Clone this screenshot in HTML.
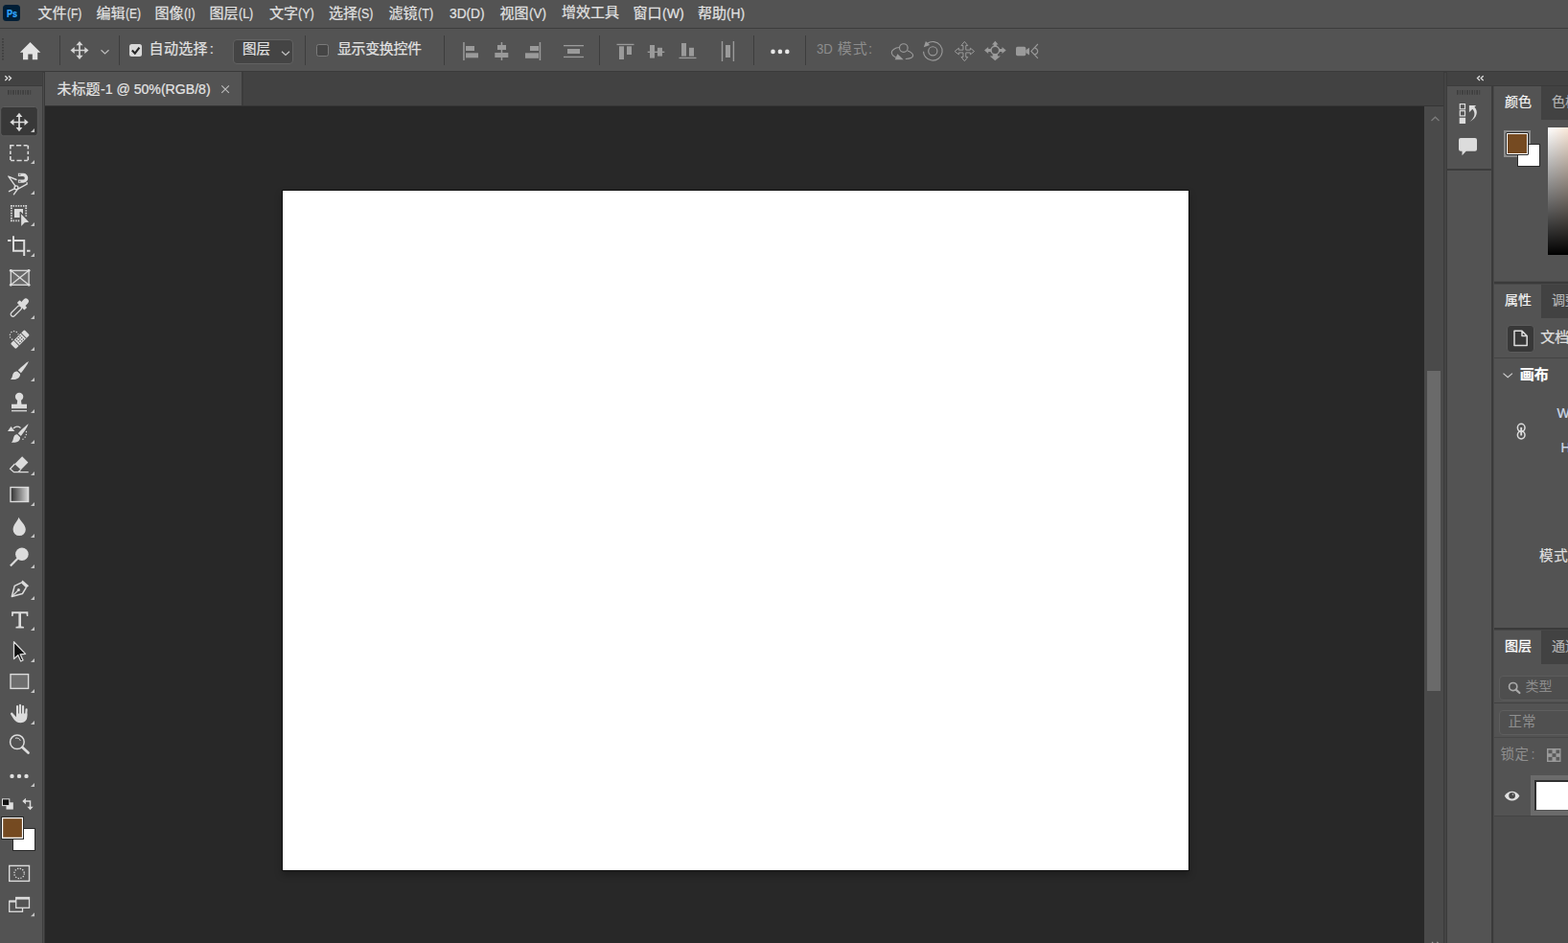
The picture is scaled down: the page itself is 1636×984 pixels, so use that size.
<!DOCTYPE html>
<html lang="zh">
<head>
<meta charset="utf-8">
<title>Photoshop</title>
<style>
*{box-sizing:border-box;margin:0;padding:0}
html,body{width:1636px;height:984px;overflow:hidden;background:#535353}
body{position:relative;font-family:"Liberation Sans","Noto Sans CJK SC",sans-serif;font-size:15px;color:#e2e2e2;line-height:1}
.a{position:absolute}
.t{position:absolute;white-space:nowrap;line-height:20px;height:20px;-webkit-text-stroke:.22px currentColor}
.lat{display:inline-block;font-size:15px;transform:scaleX(.8);transform-origin:0 50%}
/* structural blocks */
#menubar{left:0;top:0;width:1636px;height:29px;background:#535353}
#menuline{left:0;top:29px;width:1636px;height:1px;background:#3c3c3c}
#optbar{left:0;top:30px;width:1636px;height:44px;background:#535353}
#optline{left:0;top:74px;width:1636px;height:1px;background:#3a3a3a}
#tools{left:0;top:75px;width:44px;height:909px;background:#535353}
#toolshead{left:0;top:75px;width:44px;height:14px;background:#424242}
#tooldiv{left:44px;top:75px;width:3px;height:909px;background:#3e3e3e}
#tabbar{left:47px;top:75px;width:1459px;height:36px;background:#424242}
#doctab{left:47px;top:75px;width:205px;height:35px;background:#535353}
#work{left:47px;top:111px;width:1439px;height:873px;background:#282828}
#vscroll{left:1486px;top:111px;width:20px;height:873px;background:#4a4a4a}
#vthumb{left:1489px;top:387px;width:14px;height:334px;background:#6a6a6a}
#dockdiv{left:1506px;top:75px;width:4px;height:909px;background:#3b3b3b}
#dockhead{left:1510px;top:75px;width:126px;height:14px;background:#424242}
#dockline{left:1510px;top:89px;width:126px;height:1px;background:#3a3a3a}
#iconcol{left:1510px;top:90px;width:46px;height:894px;background:#535353}
#paneldiv{left:1556px;top:90px;width:3px;height:894px;background:linear-gradient(to right,#3a3a3a 0,#3a3a3a 67%,#494949 67%)}
.sep{position:absolute;top:37px;width:1px;height:31px;background:#3d3d3d}
.m{top:4px}
.tabwell{position:absolute;left:1608px;width:28px;background:#424242}
.hline{position:absolute;left:1559px;width:77px;height:1px;background:#444}
</style>
</head>
<body>

<!-- ===== structure ===== -->
<div class="a" id="menubar"></div>
<div class="a" id="menuline"></div>
<div class="a" id="optbar"></div>
<div class="a" id="optline"></div>
<div class="a" id="tools"></div>
<div class="a" id="toolshead"></div><div class="a" style="left:0;top:89px;width:44px;height:1px;background:#3a3a3a"></div>
<div class="a" id="tooldiv"></div><div class="a" style="left:45px;top:76px;width:1px;height:908px;background:#4b4b4b"></div><div class="a" style="left:46px;top:75px;width:1px;height:909px;background:#393939"></div>
<div class="a" id="tabbar"></div>
<div class="a" id="doctab"></div><div class="a" style="left:252px;top:75px;width:1.5px;height:35px;background:#3c3c3c"></div><div class="a" style="left:47px;top:110px;width:1459px;height:1px;background:#353535"></div>
<div class="a" id="work"></div>
<div class="a" id="vscroll"></div>
<div class="a" id="vthumb"></div>
<div class="a" id="dockdiv"></div><div class="a" style="left:1507px;top:76px;width:2px;height:908px;background:#444"></div>
<div class="a" id="dockhead"></div>
<div class="a" id="dockline"></div>
<div class="a" id="iconcol"></div>
<div class="a" id="paneldiv"></div>

<!-- canvas document -->
<div class="a" style="left:294px;top:198px;width:947px;height:711px;background:#111;box-shadow:0 4px 7px rgba(0,0,0,.26)"></div>
<div class="a" style="left:295px;top:199px;width:945px;height:709px;background:#fff"></div>

<!-- ===== menu bar ===== -->
<svg class="a" style="left:3px;top:5px" width="18" height="17" viewBox="0 0 18 17"><rect x="0" y="0" width="18" height="17" rx="3.5" fill="#001e36"/></svg>
<div class="t" style="left:6.7px;top:4.6px;font-size:10.3px;font-weight:bold;color:#31a8ff"><span class="lat" style="font-size:10.3px;transform:scaleX(.88)">Ps</span></div>
<div class="t m" id="m1" style="left:39.5px">文件<span class="lat" style="transform:scaleX(0.8)">(F)</span></div>
<div class="t m" id="m2" style="left:100.5px">编辑<span class="lat" style="transform:scaleX(0.8)">(E)</span></div>
<div class="t m" id="m3" style="left:161.5px">图像<span class="lat" style="transform:scaleX(0.82)">(I)</span></div>
<div class="t m" id="m4" style="left:218.5px">图层<span class="lat" style="transform:scaleX(0.83)">(L)</span></div>
<div class="t m" id="m5" style="left:281px">文字<span class="lat" style="transform:scaleX(0.84)">(Y)</span></div>
<div class="t m" id="m6" style="left:343px">选择<span class="lat" style="transform:scaleX(0.82)">(S)</span></div>
<div class="t m" id="m7" style="left:405.5px">滤镜<span class="lat" style="transform:scaleX(0.84)">(T)</span></div>
<div class="t m" id="m8" style="left:468.5px"><span class="lat" style="transform:scaleX(0.915)">3D(D)</span></div>
<div class="t m" id="m9" style="left:521.5px">视图<span class="lat" style="transform:scaleX(0.9)">(V)</span></div>
<div class="t" id="m10" style="left:586px;top:3px">增效工具</div>
<div class="t m" id="m11" style="left:660.5px">窗口<span class="lat" style="transform:scaleX(0.94)">(W)</span></div>
<div class="t m" id="m12" style="left:728px">帮助<span class="lat" style="transform:scaleX(0.92)">(H)</span></div>
<!--MENU-->
<!-- ===== options bar ===== -->
<div class="sep" style="left:62px"></div>
<div class="sep" style="left:124px"></div>
<div class="sep" style="left:318px"></div>
<div class="sep" style="left:463px"></div>
<div class="sep" style="left:625px"></div>
<div class="sep" style="left:786px"></div>
<div class="sep" style="left:840px"></div>
<div class="a" style="left:135px;top:46px;width:13px;height:13px;border-radius:2.5px;background:#d9d9d9"></div>
<div class="t" id="o1" style="left:155.6px;top:41.4px"><span style="letter-spacing:.3px">自动选择</span><span style="margin-left:2px">:</span></div>
<div class="a" style="left:243px;top:41px;width:63px;height:26px;border-radius:4px;background:#444;border:1px solid #626262"></div>
<div class="t" id="o2" style="left:253px;top:41.3px;font-size:14.5px">图层</div>
<div class="a" style="left:330px;top:46px;width:13px;height:13px;border-radius:2.5px;background:#454545;border:1px solid #7a7a7a"></div>
<div class="t" id="o3" style="left:352px;top:41.4px;letter-spacing:-0.4px">显示变换控件</div>
<div class="t" id="o4" style="left:851.5px;top:41px;color:#8d8d8d;-webkit-text-stroke:0"><span class="lat" style="transform:scaleX(.88);width:18px">3D</span> <span style="letter-spacing:1.2px">模式</span>:</div>
<!--OPTIONS-->
<!-- ===== document tab ===== -->
<div class="t" id="dt" style="left:59.5px;top:82.5px;color:#e4e4e4">未标题<span class="lat" style="transform:scaleX(.94)">-1 @ 50%(RGB/8)</span></div>
<!-- ===== icon column panel ===== -->
<div class="a" style="left:1509px;top:89px;width:48px;height:88px;border:1px solid #3c3c3c;background:#535353"></div>
<div class="a" style="left:1509px;top:177px;width:48px;height:1px;background:#3c3c3c"></div>
<!-- ===== color panel ===== -->
<div class="tabwell" style="top:90px;height:35px"></div>
<div class="t" id="p1" style="left:1570px;top:96px;font-size:14px;color:#f6f6f6;-webkit-text-stroke:.2px #f6f6f6">颜色</div>
<div class="t" id="p1b" style="left:1619px;top:96px;font-size:14px;color:#b4b4b4">色板</div>
<div class="a" style="left:1569px;top:136px;width:28px;height:28px;background:#8c8c8c"></div>
<div class="a" style="left:1583px;top:150px;width:24px;height:24px;background:#fff;border:1px solid #2a2a2a"></div>
<div class="a" style="left:1571px;top:138px;width:24px;height:24px;background:#fff;border:1px solid #262626;border-radius:1px"></div>
<div class="a" style="left:1573px;top:140px;width:20px;height:20px;background:#754a21"></div>
<div class="a" style="left:1615px;top:133px;width:21px;height:133px;background:linear-gradient(to bottom,rgba(0,0,0,0) 0%,#000 100%),linear-gradient(to right,#fff 0%,#fbe9da 100%)"></div>
<div class="a" style="left:1559px;top:293px;width:77px;height:4px;background:linear-gradient(#4b4b4b 0,#4b4b4b 25%,#3a3a3a 25%,#3a3a3a 75%,#474747 75%)"></div>
<!-- ===== properties panel ===== -->
<div class="tabwell" style="top:297px;height:35px"></div>
<div class="t" id="p2" style="left:1570px;top:303px;font-size:14px;color:#f6f6f6;-webkit-text-stroke:.2px #f6f6f6">属性</div>
<div class="t" id="p2b" style="left:1619px;top:303px;font-size:14px;color:#b4b4b4">调整</div>
<div class="a" style="left:1572px;top:339px;width:29px;height:29px;border:1px solid #5c5c5c;border-radius:4px;background:#383838"></div>
<div class="t" id="p3" style="left:1607.3px;top:342px;color:#e0e0e0">文档</div>
<div class="hline" style="top:373px"></div>
<div class="t" id="p4" style="left:1585.7px;top:380.8px;font-weight:bold;color:#fff">画布</div>
<div class="t" id="p5" style="left:1624.5px;top:421px;font-size:14px;color:#cfd9e8">W</div>
<div class="t" id="p6" style="left:1628.500px;top:456.500px;font-size:14px;color:#cfd9e8">H</div>
<div class="t" id="p7" style="left:1606px;top:569.5px;font-size:14.5px;letter-spacing:.8px;color:#dedede">模式</div>
<div class="a" style="left:1559px;top:655px;width:77px;height:3px;background:linear-gradient(#3a3a3a 0,#3a3a3a 67%,#474747 67%)"></div>
<!-- ===== layers panel ===== -->
<div class="tabwell" style="top:658px;height:35px"></div>
<div class="t" id="p8" style="left:1570px;top:664px;font-size:14px;color:#fff;-webkit-text-stroke:.3px #fff">图层</div>
<div class="t" id="p8b" style="left:1619px;top:664px;font-size:14px;color:#b4b4b4">通道</div>
<div class="a" style="left:1564px;top:705px;width:80px;height:26px;border:1px solid #5c5c5c;border-radius:4px;background:#4e4e4e"></div>
<div class="t" id="p9" style="left:1591.5px;top:706px;font-size:14px;color:#8c8c8c;-webkit-text-stroke:0">类型</div>
<div class="hline" style="top:733px;background:#414141"></div>
<div class="a" style="left:1564px;top:741px;width:80px;height:26px;border:1px solid #5e5e5e;border-radius:4px;background:#505050"></div>
<div class="t" id="p10" style="left:1573.5px;top:743px;font-size:14.500px;color:#8f8f8f;-webkit-text-stroke:0">正常</div>
<div class="hline" style="top:769px;background:#484848"></div>
<div class="t" id="p11" style="left:1565.5px;top:777px;font-size:14.500px;color:#8f8f8f;-webkit-text-stroke:0"><span style="letter-spacing:.5px">锁定</span><span style="margin-left:2px">:</span></div>
<div class="a" style="left:1597px;top:809px;width:39px;height:42px;background:#6b6b6b"></div>
<div class="a" style="left:1601px;top:814px;width:35px;height:32px;background:#fff;border-left:2px solid #303030;border-top:2px solid #303030;border-bottom:1px solid #555"></div>
<div class="hline" style="top:851px;background:#444"></div>
<div class="a" style="left:1559px;top:852px;width:77px;height:132px;background:#4d4d4d"></div>
<!--PANELS-->
<!-- ===== icon overlay (page coordinates) ===== -->
<svg class="a" style="left:0;top:0" width="1636" height="984" viewBox="0 0 1636 984" fill="none">
<g id="optbar-icons">
<!-- gripper -->
<path d="M3 40v24" stroke="#3f3f3f" stroke-width="2" stroke-dasharray="1.5 1.5"/>
<!-- home -->
<path d="M31.5 44 L42.3 54.8 H39.2 V62.2 H33.8 V56.6 H29.3 V62.2 H24 V54.8 H20.8 Z" fill="#e3e3e3"/>
<!-- move tool (options) -->
<g stroke="#d4d4d4" stroke-width="1.7"><path d="M83 45.5v14M76 52.5h14"/></g>
<path d="M83 43l3.6 4.2h-7.2zM83 62l3.6-4.2h-7.2zM73.5 52.5l4.2-3.6v7.2zM92.5 52.5l-4.2-3.6v7.2z" fill="#d4d4d4"/>
<path d="M105.5 52.3l4 3.6 4-3.6" stroke="#bdbdbd" stroke-width="1.2"/>
<!-- checkmark -->
<path d="M137.8 52.6l3 3 4.6-6" stroke="#262626" stroke-width="2.1"/>
<!-- dropdown chevron -->
<path d="M294 53.8l4 3.6 4-3.6" stroke="#c4c4c4" stroke-width="1.2"/>
<!-- align group 1 -->
<g fill="#9a9a9a">
<rect x="483.2" y="44" width="1.5" height="19"/><rect x="486" y="48" width="9" height="5"/><rect x="486" y="55.3" width="13" height="5"/>
<rect x="522.7" y="44" width="1.5" height="19"/><rect x="519" y="47" width="9" height="5"/><rect x="516.3" y="55" width="14" height="5"/>
<rect x="562.7" y="44" width="1.5" height="19"/><rect x="553" y="48" width="9" height="5"/><rect x="548" y="55.3" width="14" height="5.5"/>
<rect x="588" y="47" width="21" height="1.3"/><rect x="588" y="58.8" width="21" height="1.3"/><rect x="592" y="51" width="13" height="5"/>
<!-- align group 2 -->
<rect x="643.5" y="45.8" width="18" height="1.3"/><rect x="646" y="48.3" width="5" height="13.7"/><rect x="654" y="48.3" width="5" height="8.7"/>
<rect x="675.7" y="53.6" width="17.6" height="1.4"/><rect x="678" y="47" width="5" height="13.6"/><rect x="686" y="49.8" width="5" height="8.8"/>
<rect x="708.5" y="59.8" width="18" height="1.3"/><rect x="711" y="45" width="5" height="13.6"/><rect x="719" y="49.8" width="5" height="8.8"/>
<rect x="752.8" y="43" width="1.4" height="21"/><rect x="764.7" y="43" width="1.4" height="21"/><rect x="757" y="47" width="5" height="13"/>
</g>
<!-- dots -->
<g fill="#e8e8e8"><circle cx="806.5" cy="53.9" r="2.3"/><circle cx="813.9" cy="53.9" r="2.3"/><circle cx="821.3" cy="53.9" r="2.3"/></g>
<!-- 3D icons -->
<g stroke="#9a9a9a" stroke-width="1.15" fill="none">
<circle cx="942.8" cy="50" r="4.3"/>
<path d="M938.5 49.5c-5 .3-8.500 3-8.200 5.500c.3 2.500 2.500 4.500 6.500 5.500M947 53c3.500 1.300 5.800 3.300 5.600 5.200c-.4 2.500-4 3.200-7.800 3.300"/>
<circle cx="973.3" cy="53.300" r="9.800" stroke-dasharray="52 9.600" transform="rotate(-128 973.3 53.3)"/>
<circle cx="973.3" cy="53.300" r="4.600"/>
<path d="M1006.35 43.35L1009.75 47.55L1007.75 47.55L1007.75 52.15L1012.35 52.15L1012.35 50.15L1016.55 53.55L1012.35 56.95L1012.35 54.95L1007.75 54.95L1007.75 59.55L1009.75 59.55L1006.35 63.75L1002.95 59.55L1004.95 59.55L1004.95 54.95L1000.35 54.95L1000.35 56.95L996.15 53.55L1000.35 50.15L1000.35 52.15L1004.95 52.15L1004.95 47.55L1002.95 47.55Z" stroke-width="1" stroke-linejoin="round"/>
<circle cx="1038.300" cy="52.500" r="4.300" stroke-width="1.400"/>
<path d="M1082.9 46l-7 7.4 7 7.500M1079.300 49.700c4.600 1.800 4.600 5.600 0 7.400" stroke-width="1.100"/>
</g>
<g fill="#9a9a9a">
<path d="M936.400 56.300L942.700 62.200H933.700Z"/>
<path d="M965.900 42.900L970.100 47.100L963.800 49.200Z"/>
<path d="M1038.300 42.800l3.300 3.600h-1.800v2.500h-3v-2.500h-1.800zM1038.300 63.200l5.600-4.600h-3v-2.600h-5.200v2.600h-3zM1027 52.500l4.200-3.600v2h3v3.200h-3v2zM1049.700 52.500l-4.200-3.600v2h-3v3.200h3v2z"/>
<rect x="1060" y="48.800" width="10.300" height="9.400" rx="1.600"/><path d="M1070.300 52.300l3.700-2.500v7.600l-3.700-2.500z"/>
</g>
</g>
<g id="tools-icons">
<!-- header chevrons + gripper -->
<path d="M5.300 79.200l2.500 2.400-2.500 2.400M9 79.200l2.500 2.400-2.500 2.400" stroke="#e0e0e0" stroke-width="1.300"/>
<path d="M8 96.300h24.500" stroke="#3d3d3d" stroke-width="4.800" stroke-dasharray="1.600 1.300 0.900 1.300"/>
<!-- selected bg -->
<rect x="0.700" y="111.500" width="38.600" height="30.300" rx="3" fill="#383838" stroke="#5d5d5d" stroke-width="1"/>
<!-- flyout triangles -->
<path d="M36 134 v4 h-4zM36 167 v4 h-4zM36 199 v4 h-4zM36 232 v4 h-4zM36 264 v4 h-4zM36 329 v4 h-4zM36 362 v4 h-4zM36 394 v4 h-4zM36 427 v4 h-4zM36 459 v4 h-4zM36 492 v4 h-4zM36 524 v4 h-4zM36 557 v4 h-4zM36 589 v4 h-4zM36 622 v4 h-4zM36 654 v4 h-4zM36 687 v4 h-4zM36 719 v4 h-4zM36 752 v4 h-4zM36 817 v4 h-4zM36 952.300 v4 h-4z" fill="#c4c4c4"/>
<!-- 0 move -->
<path d="M20 120v15M12.500 127.500h15" stroke="#dcdcdc" stroke-width="1.700"/>
<path d="M20 117.800l3.400 4.100h-6.800zM20 137.200l3.400-4.100h-6.800zM10.400 127.500l4.100-3.400v6.800zM29.600 127.500l-4.100-3.400v6.800z" fill="#dcdcdc"/>
<!-- 1 marquee -->
<rect x="10.900" y="151.700" width="18.400" height="15.800" stroke="#dcdcdc" stroke-width="1.600" stroke-dasharray="3.700 2.400 5.200 2.400 3.900 0.800 3.900 2.200 3.300 2.200 3.900 0.800 3.700 2.400 5.200 2.400 3.900 0.800 3.900 2.200 3.300 2.200 3.900 0"/>
<!-- 2 magnetic lasso -->
<g stroke="#dcdcdc" stroke-width="1.400" stroke-linecap="round"><path d="M8.900 184.100L17 187.500M8.900 184.100L16 194.200M15.200 196.900L9.500 199.700M28.100 190.800V192L18.800 197.200M18 197.800L14.400 202.800"/><circle cx="17" cy="195.800" r="1.900"/></g>
<path d="M18.900 180.700h5.300a5.050 5.050 0 0 1 0 10.100h-5.300v-3.200h5.100a1.850 1.850 0 0 0 0-3.700h-5.100z" fill="#dcdcdc"/>
<path d="M19.800 182.300h1.600M19.800 189.200h1.600" stroke="#535353" stroke-width="1.100"/>
<!-- 3 object select -->
<path d="M11 214.900H28M11.900 214V231.200M27.200 214V226.500M11 230.400H20.400" stroke="#dcdcdc" stroke-width="1.800" stroke-dasharray="1.400 1.200"/>
<rect x="15" y="218" width="9" height="9" fill="#dcdcdc"/>
<path d="M21.300 221.500L21.500 237.700L26 233.100L31.700 232.300Z" fill="#dcdcdc" stroke="#535353" stroke-width="1.500" stroke-linejoin="round"/>
<!-- 4 crop -->
<path d="M14 246.300v15.500h11M8 250.900h3.500M14 250.900h11.200v16.200M28 261.800h3.500" stroke="#dcdcdc" stroke-width="2"/>
<!-- 5 frame -->
<rect x="11.300" y="282.300" width="18.800" height="15" fill="#6a6a6a" stroke="#dcdcdc" stroke-width="1.300"/>
<path d="M11.300 282.300l18.800 15M30.100 282.300l-18.800 15" stroke="#dcdcdc" stroke-width="1.300"/>
<g fill="#dcdcdc"><circle cx="11.300" cy="282.300" r="1.400"/><circle cx="30.100" cy="282.300" r="1.400"/><circle cx="11.300" cy="297.300" r="1.400"/><circle cx="30.100" cy="297.300" r="1.400"/></g>
<!-- 6 eyedropper -->
<g transform="translate(20.400 321) rotate(45)">
<rect x="-2.300" y="-2" width="4.600" height="14" rx="2.300" stroke="#dcdcdc" stroke-width="1.300"/>
<rect x="-5.400" y="-5.600" width="10.800" height="4" rx="0.800" fill="#dcdcdc"/>
<rect x="-2.900" y="-12.200" width="5.800" height="8.500" rx="2.900" fill="#dcdcdc"/>
</g>
<!-- 7 healing -->
<circle cx="14.800" cy="350.200" r="4.500" stroke="#dcdcdc" stroke-width="1.200" stroke-dasharray="1.300 1.530"/>
<g transform="translate(20.900 354.100) rotate(-45)">
<rect x="-10.300" y="-4.600" width="20.600" height="9.200" fill="#535353"/>
<rect x="-10.300" y="-3.900" width="20.600" height="7.800" rx="1.300" fill="#dcdcdc"/>
<rect x="-5.700" y="-3.900" width="0.900" height="7.800" fill="#535353"/><rect x="4.800" y="-3.900" width="0.900" height="7.800" fill="#535353"/>
<g fill="#4a4a4a"><rect x="-3.1" y="-3.0" width="1.200" height="1.200"/><rect x="-0.6" y="-3.0" width="1.200" height="1.200"/><rect x="1.900" y="-3.0" width="1.200" height="1.200"/><rect x="-3.1" y="-0.6" width="1.200" height="1.200"/><rect x="-0.6" y="-0.6" width="1.200" height="1.200"/><rect x="1.900" y="-0.600" width="1.200" height="1.200"/><rect x="-3.1" y="1.8" width="1.200" height="1.200"/><rect x="-0.6" y="1.8" width="1.200" height="1.200"/><rect x="1.900" y="1.800" width="1.200" height="1.200"/></g>
</g>
<!-- 8 brush -->
<path d="M30 376.900C27 378.500 22.500 382.500 18.800 386.300L21.900 389.200C25 385.500 28.500 380.500 30 376.900Z" fill="#dcdcdc"/>
<path d="M18 387.400L21 390.300C21.300 393.500 18.500 395.600 15.500 395.900C13.800 396.100 12 396 11 395.900C12.600 394.800 12.800 392.500 13.400 390.500C14.200 388.200 16 387.200 18 387.400Z" fill="#dcdcdc"/>
<!-- 9 stamp -->
<circle cx="20.100" cy="414" r="4.200" fill="#dcdcdc"/>
<path d="M18.300 417h3.600l.6 4.800h5.500v4.500h-16v-4.500h5.700z" fill="#dcdcdc"/>
<path d="M12 428.700h16" stroke="#dcdcdc" stroke-width="1.300"/>
<!-- 10 history brush -->
<path d="M29.700 442.300C27 444 22.300 448.500 18.800 452.300L21.800 455C25 451 28.500 446 29.700 442.300Z" fill="#dcdcdc"/>
<path d="M18 453.300L21 456.200C21.300 459.400 18.500 461.500 15.500 461.700C13.800 461.900 12.800 461.800 11.800 461.700C13.400 460.600 13.600 458.400 14.200 456.400C15 454.100 16.200 453.100 18 453.300Z" fill="#dcdcdc"/>
<path d="M14 447C16 445 19 444.700 21.500 446.500" stroke="#dcdcdc" stroke-width="1.300"/>
<path d="M11.500 445.100L15.300 449.900H8Z" fill="#dcdcdc"/>
<path d="M27.400 449.800C28 453.500 26.800 456.800 23.200 458.700" stroke="#dcdcdc" stroke-width="1.200" stroke-dasharray="1.300 1.700"/>
<!-- 11 eraser -->
<path d="M23.100 476.200l6.300 6.300l-7.600 7.800l-6.500-6z" fill="#dcdcdc"/>
<path d="M15.500 484l-4.900 5.200l3.900 3.500h15.200M21.600 490.200l-2.800 2.600" stroke="#dcdcdc" stroke-width="1.300"/>
<!-- 12 gradient -->
<defs><linearGradient id="gr1" x1="0" x2="1" y1="0" y2="0"><stop offset="0" stop-color="#2e2e2e"/><stop offset="1" stop-color="#d8d8d8"/></linearGradient></defs>
<rect x="11" y="508.500" width="18.600" height="15" fill="url(#gr1)" stroke="#dcdcdc" stroke-width="1.400"/>
<!-- 13 blur -->
<path d="M19.600 539.800c1.500 3.800 7.200 8 7.200 12.700a6.600 6.600 0 0 1-13.200 0c0-4.700 4.800-8.900 6-12.700z" fill="#dcdcdc"/>
<!-- 14 dodge -->
<circle cx="22.900" cy="578.300" r="6.800" fill="#dcdcdc"/>
<path d="M18.500 582.700l-7.600 7.700" stroke="#dcdcdc" stroke-width="2.200"/>
<!-- 15 pen -->
<path d="M22 608.100L15.200 611.400L12.300 622.500L23.400 619.500L27.300 613.200" stroke="#dcdcdc" stroke-width="1.500" stroke-linejoin="round"/>
<path d="M23.500 605.400L30.100 611.300L27.400 613.600L21.700 608.100Z" fill="#dcdcdc"/>
<path d="M12.800 622L19 616" stroke="#dcdcdc" stroke-width="1.200"/><circle cx="19.400" cy="615.600" r="1.500" fill="#dcdcdc"/>
<!-- 16 type -->
<path d="M12.100 638.200h17.200v4.800h-1.400l-.5-2.800h-5.400v13.400l2.900 .5v1.500h-8.400v-1.500l2.900-.5v-13.400h-5.400l-.5 2.800h-1.400z" fill="#dcdcdc"/>
<!-- 17 path select -->
<path d="M14.500 669.800v17.800l4.300-3.900l2.900 6.300l2.300-1.100l-2.900-6.100l5.500-.4z" fill="#111" stroke="#dcdcdc" stroke-width="1.300" stroke-linejoin="round"/>
<!-- 18 rectangle -->
<rect x="11" y="703.600" width="18.600" height="14.800" fill="#6e6e6e" stroke="#dcdcdc" stroke-width="1.400"/>
<!-- 19 hand -->
<g fill="#dcdcdc"><rect x="17" y="736" width="2.100" height="11" rx="1.050"/><rect x="19.900" y="734.800" width="2.200" height="12" rx="1.100"/><rect x="23" y="736" width="2.100" height="11" rx="1.050"/><rect x="26.300" y="739.300" width="2.100" height="9" rx="1.050" transform="rotate(4 27.300 744)"/>
<path d="M17 744.600H28.400V747.600C28.400 752 25.200 754.300 21.600 754.300C18 754.300 16.200 752.800 14.400 750.600L11.200 745.500C10.400 744.400 11.800 743 12.900 743.800L17 748.300Z"/></g>
<!-- 20 zoom -->
<circle cx="17.900" cy="774.300" r="7.300" stroke="#dcdcdc" stroke-width="1.500"/>
<path d="M23.300 779.800l6.200 5.800" stroke="#dcdcdc" stroke-width="2.700" stroke-linecap="round"/>
<path d="M16 770.300c2.300-.8 4.600 .4 5.300 2.600" stroke="#dcdcdc" stroke-width="1"/>
<!-- 21 dots -->
<g fill="#e0e0e0"><circle cx="12.500" cy="809.900" r="2.200"/><circle cx="20" cy="809.900" r="2.200"/><circle cx="27.500" cy="809.900" r="2.200"/></g>
<!-- default colors / swap -->
<rect x="6.500" y="837.300" width="7.300" height="7.300" fill="#e0e0e0"/>
<rect x="2.500" y="833.800" width="7.300" height="6.800" fill="#111" stroke="#e0e0e0" stroke-width="1"/>
<path d="M26 836h5.500v6.500" stroke="#dcdcdc" stroke-width="1.500"/>
<path d="M23.300 836l3.600-3.200v6.400zM31.500 845.300l-3.200-3.600h6.400z" fill="#dcdcdc"/>
<!-- fg/bg swatches -->
<rect x="13.500" y="864.500" width="23" height="23" fill="#fff" stroke="#2a2a2a" stroke-width="1"/>
<rect x="1.500" y="852.500" width="23" height="23" fill="#fff" stroke="#2a2a2a" stroke-width="1"/>
<rect x="3.200" y="854.200" width="19.700" height="19.500" fill="#754a21"/>
<!-- quick mask -->
<rect x="9.700" y="903.400" width="20.800" height="16" stroke="#dcdcdc" stroke-width="1.400"/>
<circle cx="20.100" cy="911.400" r="5.200" stroke="#dcdcdc" stroke-width="1.300" stroke-dasharray="1.300 1.420"/>
<!-- screen mode -->
<rect x="9.700" y="940.300" width="13.800" height="11" stroke="#dcdcdc" stroke-width="1.300"/><path d="M9.700 940.600h7" stroke="#dcdcdc" stroke-width="2"/>
<rect x="16.700" y="936.500" width="13.800" height="10.800" fill="#535353" stroke="#dcdcdc" stroke-width="1.300"/><path d="M16.700 937.300h13.800" stroke="#dcdcdc" stroke-width="2.600"/>
</g>
<!--TOOLS-->
<g id="right-icons">
<!-- doc tab close -->
<path d="M231.300 89.300l7.600 7.600M238.900 89.300l-7.600 7.600" stroke="#bdbdbd" stroke-width="1.100"/>
<!-- scrollbar arrow -->
<path d="M1493.500 126l4-3.800 4 3.800" stroke="#7c7c7c" stroke-width="1.200"/>
<path d="M1494 984l1.200-1.200M1500.500 984l-1.200-1.200" stroke="#9a9a9a" stroke-width="1.200"/>
<!-- dock header chevrons + gripper -->
<path d="M1544 79.200l-2.500 2.400 2.500 2.400M1547.700 79.200l-2.500 2.400 2.500 2.400" stroke="#e0e0e0" stroke-width="1.300"/>
<path d="M1520 96.300h24.500" stroke="#3d3d3d" stroke-width="4.800" stroke-dasharray="1.600 1.300 0.900 1.300"/>
<!-- history icon -->
<g stroke="#dcdcdc" stroke-width="1.200"><rect x="1523.300" y="108.600" width="5.200" height="5.200"/><rect x="1523.300" y="115.700" width="5.200" height="5.200"/></g>
<rect x="1522.700" y="122.800" width="6.400" height="6.200" fill="#dcdcdc"/>
<path d="M1532.900 110H1540.100L1532.900 117.300ZM1538.200 111.600C1542.800 116 1541.500 123 1533.400 127.100C1539.300 122.600 1539.700 117.600 1536.300 113.800Z" fill="#dcdcdc"/>
<!-- comment icon -->
<path d="M1524 144h15a2 2 0 0 1 2 2v9.700a2 2 0 0 1-2 2h-9.300l-4.200 4.500v-4.500h-1.500a2 2 0 0 1-2-2v-9.700a2 2 0 0 1 2-2z" fill="#dcdcdc"/>
<!-- doc icon -->
<path d="M1580 345.300h8l5.200 5.200v10h-13.200zM1588 345.300v5.200h5.200" stroke="#dcdcdc" stroke-width="1.500" stroke-linejoin="round"/>
<!-- canvas chevron -->
<path d="M1568.500 389.600l4.700 4.200 4.700-4.200" stroke="#cfcfcf" stroke-width="1.200"/>
<!-- link icon -->
<g stroke="#dcdcdc" stroke-width="1.500"><rect x="1583.400" y="442.300" width="7.600" height="8" rx="3.800"/><rect x="1583.400" y="449.900" width="7.600" height="8" rx="3.800"/></g>
<path d="M1587.200 446v8.500" stroke="#dcdcdc" stroke-width="1.900"/>
<!-- search icon -->
<circle cx="1578.700" cy="716.600" r="4.100" stroke="#aaa" stroke-width="1.700"/>
<path d="M1581.700 719.600l3.700 3.400" stroke="#aaa" stroke-width="2.200" stroke-linecap="round"/>
<!-- lock transparent icon -->
<rect x="1614" y="781" width="14.500" height="14" fill="#9a9a9a"/>
<g fill="#5a5a5a"><rect x="1615.500" y="782.500" width="4" height="3.700"/><rect x="1623.500" y="782.500" width="3.700" height="3.700"/><rect x="1619.500" y="786.200" width="4" height="3.700"/><rect x="1615.500" y="789.900" width="4" height="3.700"/><rect x="1623.500" y="789.900" width="3.700" height="3.700"/></g>
<!-- eye -->
<path d="M1569.800 830.600c3.500-6.600 12.100-6.600 15.600 0c-3.500 6.600-12.100 6.600-15.600 0z" fill="#e0e0e0"/>
<circle cx="1577.600" cy="830.300" r="3.300" fill="#474747"/><circle cx="1578.500" cy="829" r=".8" fill="#c8c8c8"/>
</g>
<!--RIGHT-->
</svg>
<!--ICONS-->
</body>
</html>
